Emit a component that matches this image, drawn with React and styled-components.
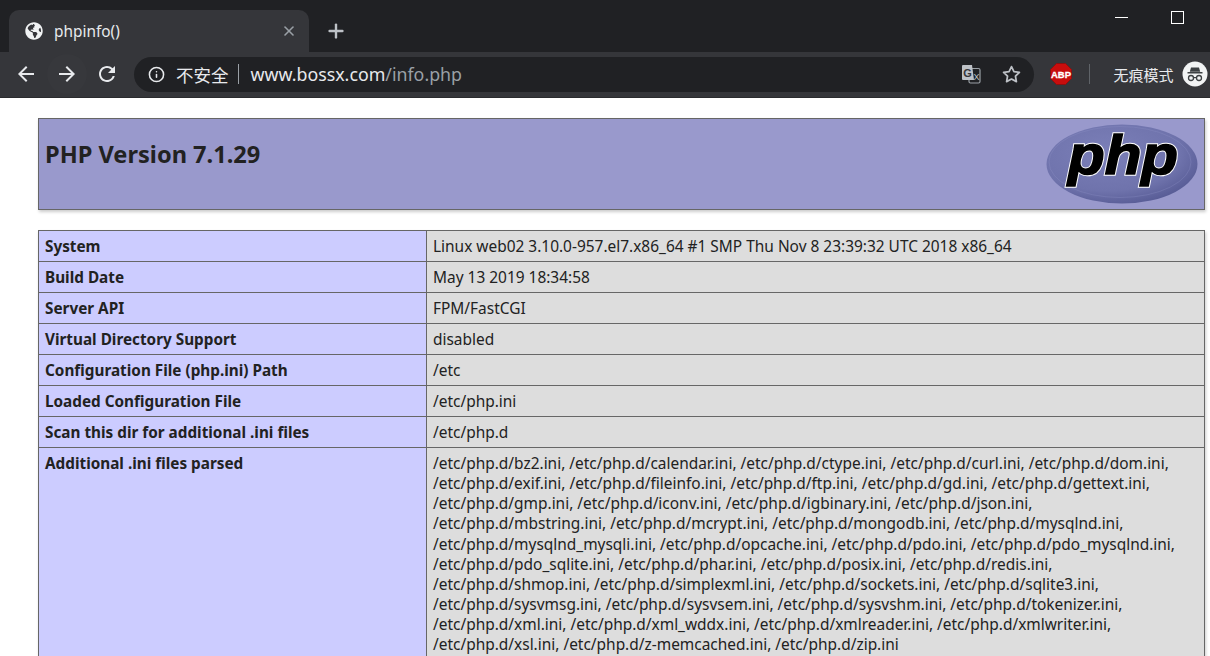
import React from "react";
import styled, { createGlobalStyle } from "styled-components";
import { FaGlobeAmericas } from "react-icons/fa";
import { FiInfo, FiStar, FiX, FiPlus } from "react-icons/fi";
import { MdArrowBack, MdArrowForward, MdRefresh } from "react-icons/md";

const GlobalStyle = createGlobalStyle`
  html, body {
    margin: 0;
    padding: 0;
    height: 100%;
    overflow: hidden;
    background: #fff;
  }
  body {
    font-family: "Noto Sans", "Open Sans", sans-serif;
  }
`;

const rows = [
  ["System", "Linux web02 3.10.0-957.el7.x86_64 #1 SMP Thu Nov 8 23:39:32 UTC 2018 x86_64"],
  ["Build Date", "May 13 2019 18:34:58"],
  ["Server API", "FPM/FastCGI"],
  ["Virtual Directory Support", "disabled"],
  ["Configuration File (php.ini) Path", "/etc"],
  ["Loaded Configuration File", "/etc/php.ini"],
  ["Scan this dir for additional .ini files", "/etc/php.d"],
  [
    "Additional .ini files parsed",
    [
      "/etc/php.d/bz2.ini, /etc/php.d/calendar.ini, /etc/php.d/ctype.ini, /etc/php.d/curl.ini, /etc/php.d/dom.ini,",
      "/etc/php.d/exif.ini, /etc/php.d/fileinfo.ini, /etc/php.d/ftp.ini, /etc/php.d/gd.ini, /etc/php.d/gettext.ini,",
      "/etc/php.d/gmp.ini, /etc/php.d/iconv.ini, /etc/php.d/igbinary.ini, /etc/php.d/json.ini,",
      "/etc/php.d/mbstring.ini, /etc/php.d/mcrypt.ini, /etc/php.d/mongodb.ini, /etc/php.d/mysqlnd.ini,",
      "/etc/php.d/mysqlnd_mysqli.ini, /etc/php.d/opcache.ini, /etc/php.d/pdo.ini, /etc/php.d/pdo_mysqlnd.ini,",
      "/etc/php.d/pdo_sqlite.ini, /etc/php.d/phar.ini, /etc/php.d/posix.ini, /etc/php.d/redis.ini,",
      "/etc/php.d/shmop.ini, /etc/php.d/simplexml.ini, /etc/php.d/sockets.ini, /etc/php.d/sqlite3.ini,",
      "/etc/php.d/sysvmsg.ini, /etc/php.d/sysvsem.ini, /etc/php.d/sysvshm.ini, /etc/php.d/tokenizer.ini,",
      "/etc/php.d/xml.ini, /etc/php.d/xml_wddx.ini, /etc/php.d/xmlreader.ini, /etc/php.d/xmlwriter.ini,",
      "/etc/php.d/xsl.ini, /etc/php.d/z-memcached.ini, /etc/php.d/zip.ini",
    ],
  ],
];

const PhpLogo = () => (
  <svg width="152" height="80" viewBox="0 0 152 80">
    <defs>
      <radialGradient id="phpOval" cx="40%" cy="35%" r="70%">
        <stop offset="0%" stopColor="#7b7fb8" />
        <stop offset="70%" stopColor="#6f73ac" />
        <stop offset="100%" stopColor="#565a94" />
      </radialGradient>
    </defs>
    <ellipse cx="76" cy="40" rx="75.5" ry="39.5" fill="url(#phpOval)" />
    <ellipse cx="74" cy="38" rx="71" ry="35.5" fill="none" stroke="#8f93c6" strokeWidth="1" opacity="0.3" />
    <g
      fontFamily="'Liberation Sans', sans-serif"
      fontWeight="700"
      fontStyle="italic"
      fontSize="56"
      textAnchor="middle"
    >
      <text x="77" y="50" textLength="110" lengthAdjust="spacingAndGlyphs" fill="#fff" stroke="#fff" strokeWidth="3.4">
        php
      </text>
      <text x="77" y="50" textLength="110" lengthAdjust="spacingAndGlyphs" fill="#000" stroke="#000" strokeWidth="1.6">
        php
      </text>
    </g>
  </svg>
);

const TranslateIcon = () => (
  <svg width="20" height="20" viewBox="0 0 20 20">
    <rect x="8" y="4.5" width="11" height="14.5" rx="1.5" fill="none" stroke="#9aa0a6" strokeWidth="1.2" />
    <path d="M2 1h9l2 15H2a1 1 0 0 1-1-1V2a1 1 0 0 1 1-1z" fill="#bdc1c6" />
    <text x="6.5" y="12.5" textAnchor="middle" fontFamily="'Liberation Sans', sans-serif" fontWeight="700" fontSize="11" fill="#35363a">
      G
    </text>
    <text x="15.5" y="16" textAnchor="middle" fontFamily="'Liberation Sans', sans-serif" fontSize="9" fill="#bdc1c6">
      X
    </text>
  </svg>
);

const AbpIcon = () => (
  <svg width="22" height="22" viewBox="0 0 22 22">
    <polygon points="6.5,0.5 15.5,0.5 21.5,6.5 21.5,15.5 15.5,21.5 6.5,21.5 0.5,15.5 0.5,6.5" fill="#c70d0d" stroke="#8a1010" />
    <text
      x="11"
      y="14.5"
      textAnchor="middle"
      fontFamily="'Liberation Sans', sans-serif"
      fontWeight="700"
      fontSize="9.5"
      fill="#fff"
      stroke="#fff"
      strokeWidth="0.3"
    >
      ABP
    </text>
  </svg>
);

const IncognitoIcon = () => (
  <svg width="26" height="26" viewBox="0 0 26 26">
    <circle cx="13" cy="13" r="12.5" fill="#f1f3f4" />
    <path d="M9 6.5h8l1.2 4.3H7.8z" fill="#3c4043" />
    <rect x="5.5" y="11" width="15" height="1.5" fill="#3c4043" />
    <circle cx="9" cy="17" r="2.5" fill="none" stroke="#3c4043" strokeWidth="1.3" />
    <circle cx="17" cy="17" r="2.5" fill="none" stroke="#3c4043" strokeWidth="1.3" />
    <path d="M11.5 16.6h3" stroke="#3c4043" strokeWidth="1.2" />
  </svg>
);

const App = () => (
  <>
    <GlobalStyle />
    <TitleBar>
      <Tab>
        <Favicon>
          <FaGlobeAmericas size={18} />
        </Favicon>
        <TabTitle>phpinfo()</TabTitle>
        <TabClose>
          <FiX size={16} strokeWidth={2.4} />
        </TabClose>
      </Tab>
      <NewTab>
        <FiPlus size={22} strokeWidth={2.6} />
      </NewTab>
      <WindowControls>
        <MinimizeButton />
        <MaximizeButton />
      </WindowControls>
    </TitleBar>
    <Toolbar>
      <NavButton>
        <MdArrowBack size={24} />
      </NavButton>
      <NavButton $active>
        <MdArrowForward size={24} />
      </NavButton>
      <NavButton>
        <MdRefresh size={24} />
      </NavButton>
      <Omnibox>
        <FiInfo size={17} strokeWidth={2.2} />
        <Insecure>不安全</Insecure>
        <Divider />
        <Url>
          www.bossx.com<UrlPath>/info.php</UrlPath>
        </Url>
        <OmniboxActions>
          <TranslateIcon />
          <FiStar size={19} strokeWidth={2.2} />
        </OmniboxActions>
      </Omnibox>
      <AbpSlot>
        <AbpIcon />
      </AbpSlot>
      <ToolbarRule />
      <IncognitoLabel>无痕模式</IncognitoLabel>
      <IncognitoIcon />
    </Toolbar>
    <Page>
      <Banner>
        <BannerTitle>PHP Version 7.1.29</BannerTitle>
        <PhpLogo />
      </Banner>
      <InfoTable>
        <tbody>
          {rows.map(([label, value]) => (
            <tr key={label}>
              <LabelCell>{label}</LabelCell>
              <ValueCell>
                {Array.isArray(value) ? value.map((line) => <ValueLine key={line}>{line}</ValueLine>) : value}
              </ValueCell>
            </tr>
          ))}
        </tbody>
      </InfoTable>
    </Page>
  </>
);

const TitleBar = styled.div`
  height: 52px;
  background: #202124;
  display: flex;
  align-items: flex-end;
  padding-left: 9px;
`;

const Tab = styled.div`
  width: 300px;
  height: 42px;
  box-sizing: border-box;
  background: #35363a;
  border-radius: 10px 10px 0 0;
  display: flex;
  align-items: center;
  padding: 0 12px 0 16px;
  color: #fff;
`;

const Favicon = styled.span`
  display: flex;
  width: 18px;
  color: #f1f3f4;
`;

const TabTitle = styled.span`
  flex: 1;
  margin-left: 11px;
  font-size: 15.4px;
  color: #e8eaed;
`;

const TabClose = styled.span`
  display: flex;
  color: #9aa0a6;
`;

const NewTab = styled.span`
  display: flex;
  margin: 0 0 10px 16px;
  color: #bdc1c6;
`;

const WindowControls = styled.div`
  margin-left: auto;
  display: flex;
  align-items: flex-start;
  align-self: flex-start;
  gap: 43px;
  padding: 11px 26px 0 0;
`;

const MinimizeButton = styled.span`
  width: 13px;
  height: 1px;
  margin-top: 6px;
  background: #fff;
`;

const MaximizeButton = styled.span`
  width: 11px;
  height: 11px;
  border: 1px solid #fff;
`;

const Toolbar = styled.div`
  height: 46px;
  box-sizing: border-box;
  background: #35363a;
  border-bottom: 1px solid #2a2b2e;
  display: flex;
  align-items: center;
  gap: 0.5px;
  padding: 0 0 1px 6px;
`;

const NavButton = styled.span`
  width: 40px;
  height: 40px;
  border-radius: 50%;
  flex-shrink: 0;
  display: flex;
  align-items: center;
  justify-content: center;
  color: #e8eaed;
  background: ${({ $active }) => ($active ? "#37383c" : "transparent")};
`;

const Omnibox = styled.div`
  width: 900px;
  height: 35px;
  flex-shrink: 0;
  box-sizing: border-box;
  margin-left: 6.5px;
  background: #202124;
  border-radius: 18px;
  display: flex;
  align-items: center;
  padding: 0 13px 0 14px;
  color: #e8eaed;
`;

const Insecure = styled.span`
  margin-left: 11px;
  font-family: "Noto Sans CJK SC", sans-serif;
  font-size: 17.5px;
`;

const Divider = styled.span`
  width: 1px;
  height: 20px;
  margin: 0 12px 0 9px;
  background: #9aa0a6;
`;

const Url = styled.span`
  font-size: 17.8px;
  color: #e8eaed;
`;

const UrlPath = styled.span`
  color: #9aa0a6;
`;

const OmniboxActions = styled.div`
  margin-left: auto;
  display: flex;
  align-items: center;
  gap: 21px;
  color: #bdc1c6;
`;

const AbpSlot = styled.span`
  display: flex;
  margin-left: 15.5px;
`;

const ToolbarRule = styled.span`
  width: 1px;
  height: 20px;
  margin-left: 16px;
  background: #5f6368;
`;

const IncognitoLabel = styled.span`
  margin: 0 8px 0 23.5px;
  font-family: "Noto Sans CJK SC", sans-serif;
  font-size: 15px;
  white-space: nowrap;
  color: #e8eaed;
`;

const Page = styled.main`
  padding: 20px 0 0 38px;
  width: 1167px;
  color: #222;
  font-size: 15.45px;
`;

const Banner = styled.div`
  height: 92px;
  box-sizing: border-box;
  background: #9999cc;
  border: 1px solid #666;
  box-shadow: 1px 2px 3px #ccc;
  display: flex;
  justify-content: space-between;
  align-items: flex-start;
  padding: 5px 6px 5px 6px;
`;

const BannerTitle = styled.h1`
  margin: 13px 0 0;
  font-size: 23.6px;
  font-weight: 700;
  line-height: 34px;
`;

const InfoTable = styled.table`
  width: 100%;
  margin-top: 20px;
  border-collapse: collapse;
  table-layout: fixed;
  box-shadow: 1px 2px 3px #ccc;
`;

const LabelCell = styled.td`
  width: 388px;
  box-sizing: border-box;
  background: #ccccff;
  border: 1px solid #666;
  padding: 5px 6px;
  font-size: 15.3px;
  font-weight: 700;
  line-height: 20px;
  vertical-align: top;
`;

const ValueCell = styled.td`
  background: #dddddd;
  border: 1px solid #666;
  padding: 5px 6px;
  line-height: 20px;
`;

const ValueLine = styled.div`
  line-height: 20.12px;
  white-space: nowrap;
`;

export default App;
